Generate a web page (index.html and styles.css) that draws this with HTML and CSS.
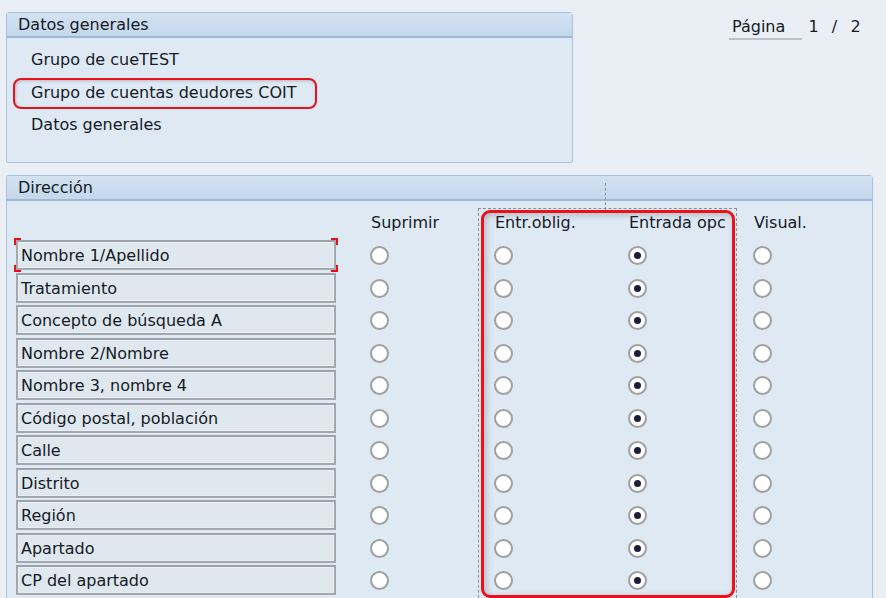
FILE: index.html
```html
<!DOCTYPE html>
<html lang="es">
<head>
<meta charset="utf-8">
<title>Modificar grupo de cuentas deudores</title>
<link rel="stylesheet" href="styles.css">
</head>
<body>
<div class="top">
  <section class="panel general">
    <div class="panel-head">Datos generales</div>
    <div class="panel-body list">
      <div class="item">Grupo de cueTEST</div>
      <div class="item marked">Grupo de cuentas deudores COIT</div>
      <div class="item">Datos generales</div>
    </div>
  </section>
  <div class="pager">
    <span class="pager-label">Página</span>
    <span class="pager-num first">1</span>
    <span class="pager-num">/</span>
    <span class="pager-num">2</span>
  </div>
</div>

<section class="panel address">
  <div class="panel-head">Dirección<span class="head-split"></span></div>
  <div class="panel-body">
    <div class="grid">
      <div></div>
      <div class="col-title">Suprimir</div>
      <div class="col-title">Entr.oblig.</div>
      <div class="col-title">Entrada opc</div>
      <div class="col-title">Visual.</div>
    </div>
    <div class="grid rows" id="rows"></div>
    <div class="group-frame"></div>
    <div class="group-mark"></div>
  </div>
</section>

<script>
  // field rows: label + four radio states, the third one selected
  var labels = ["Nombre 1/Apellido","Tratamiento","Concepto de búsqueda A","Nombre 2/Nombre","Nombre 3, nombre 4","Código postal, población","Calle","Distrito","Región","Apartado","CP del apartado",""];
  var rows = document.getElementById("rows");
  labels.forEach(function (text, i) {
    var f = document.createElement("div");
    f.className = "field" + (i === 0 ? " focus" : "");
    f.textContent = text;
    if (i === 0) {
      ["tl","tr","bl","br"].forEach(function (c) {
        var s = document.createElement("span");
        s.className = "corner " + c;
        f.appendChild(s);
      });
    }
    rows.appendChild(f);
    for (var k = 0; k < 4; k++) {
      var cell = document.createElement("div");
      cell.className = "cell";
      var r = document.createElement("span");
      r.className = "radio" + (k === 2 ? " on" : "");
      cell.appendChild(r);
      rows.appendChild(cell);
    }
  });
</script>
</body>
</html>
```

FILE: styles.css
```css
* { box-sizing: border-box; }

html, body {
  margin: 0;
  height: 100%;
  overflow: hidden;
}

body {
  background: #e9eff5;
  font-family: "DejaVu Sans", Verdana, sans-serif;
  font-size: 16px;
  color: #161a26;
}

.top {
  display: flex;
  align-items: flex-start;
  padding: 12px 0 0 6px;
}

.panel {
  border: 1px solid #a9c1da;
  border-radius: 3px 4px 2px 2px;
  background: #dfe9f3;
}

.panel-head {
  position: relative;
  height: 25px;
  padding: 2px 0 0 11px;
  background: linear-gradient(#d3e2f1, #c4d8ec);
  border-bottom: 2px solid #9db8d5;
  line-height: 19px;
}

.general {
  width: 567px;
  height: 151px;
}

.list {
  padding: 6px 0 0 0;
}

.item {
  position: relative;
  height: 32.5px;
  line-height: 31px;
  padding-left: 24px;
}

.item.marked::before {
  content: "";
  position: absolute;
  left: 6px;
  top: 1.5px;
  width: 300px;
  height: 27px;
  border: 2px solid #e8101a;
  border-radius: 8px;
  box-shadow: inset 1px 1px 3px rgba(90, 100, 120, 0.35);
}

.pager {
  display: flex;
  align-items: center;
  margin: 5px 0 0 156px;
}

.pager-label {
  display: inline-block;
  width: 73px;
  padding: 0 0 2px 3px;
  border-bottom: 2px solid #b9c2cc;
  line-height: 19px;
}

.pager-num {
  margin-left: 6px;
  width: 15px;
  padding-bottom: 4px;
  text-align: center;
}

.pager-num.first { margin-left: 4px; }

.address {
  width: 867px;
  height: 430px;
  margin: 12px 0 0 6px;
  border-bottom: none;
}

.head-split {
  position: absolute;
  left: 598px;
  top: 7px;
  height: 27px;
  border-left: 1px dashed #8c8f95;
}

.address .panel-body {
  position: relative;
  padding: 6px 0 0 9px;
}

.grid {
  display: grid;
  grid-template-columns: 354px 124px 134px 125px 1fr;
}

.col-title {
  height: 32px;
  line-height: 32px;
  padding-left: 1px;
  white-space: nowrap;
}

.rows {
  grid-auto-rows: 32.5px;
}

.field {
  position: relative;
  width: 320px;
  height: 30px;
  margin-top: 1px;
  padding-left: 3px;
  line-height: 27px;
  border: 2px solid #a2a8ae;
  border-top-color: #9ca2a9;
  background: #dfe7ef;
  white-space: nowrap;
  box-shadow: inset 0 0 0 1px #e8eef4;
}

.corner {
  position: absolute;
  width: 7px;
  height: 7px;
  border: 0 solid #e8101a;
}
.corner.tl { left: -4px; top: -4px; border-left-width: 2px; border-top-width: 2px; }
.corner.tr { right: -4px; top: -4px; border-right-width: 2px; border-top-width: 2px; }
.corner.bl { left: -4px; bottom: -4px; border-left-width: 2px; border-bottom-width: 2px; }
.corner.br { right: -4px; bottom: -4px; border-right-width: 2px; border-bottom-width: 2px; }

.cell {
  display: flex;
  align-items: center;
  padding-top: 1px;
}

.radio {
  position: relative;
  width: 19px;
  height: 19px;
  border-radius: 50%;
  border: 2px solid #a0a0a0;
  background: radial-gradient(circle at 50% 40%, #ffffff 55%, #eceeef 100%);
}

.radio.on::after {
  content: "";
  position: absolute;
  left: 50%;
  top: 50%;
  width: 7px;
  height: 7px;
  margin: -3.5px 0 0 -3.5px;
  border-radius: 50%;
  background: #1c1d36;
}

.group-frame {
  position: absolute;
  left: 471px;
  top: 7px;
  width: 259px;
  height: 420px;
  border: 1px dashed #8c8f95;
  border-bottom: none;
  pointer-events: none;
}

.group-mark {
  position: absolute;
  left: 474px;
  top: 9px;
  width: 254px;
  height: 388px;
  border: 3px solid #ec1018;
  border-radius: 9px;
  box-shadow: inset 2px 2px 6px rgba(80, 95, 115, 0.35);
  pointer-events: none;
}
```
